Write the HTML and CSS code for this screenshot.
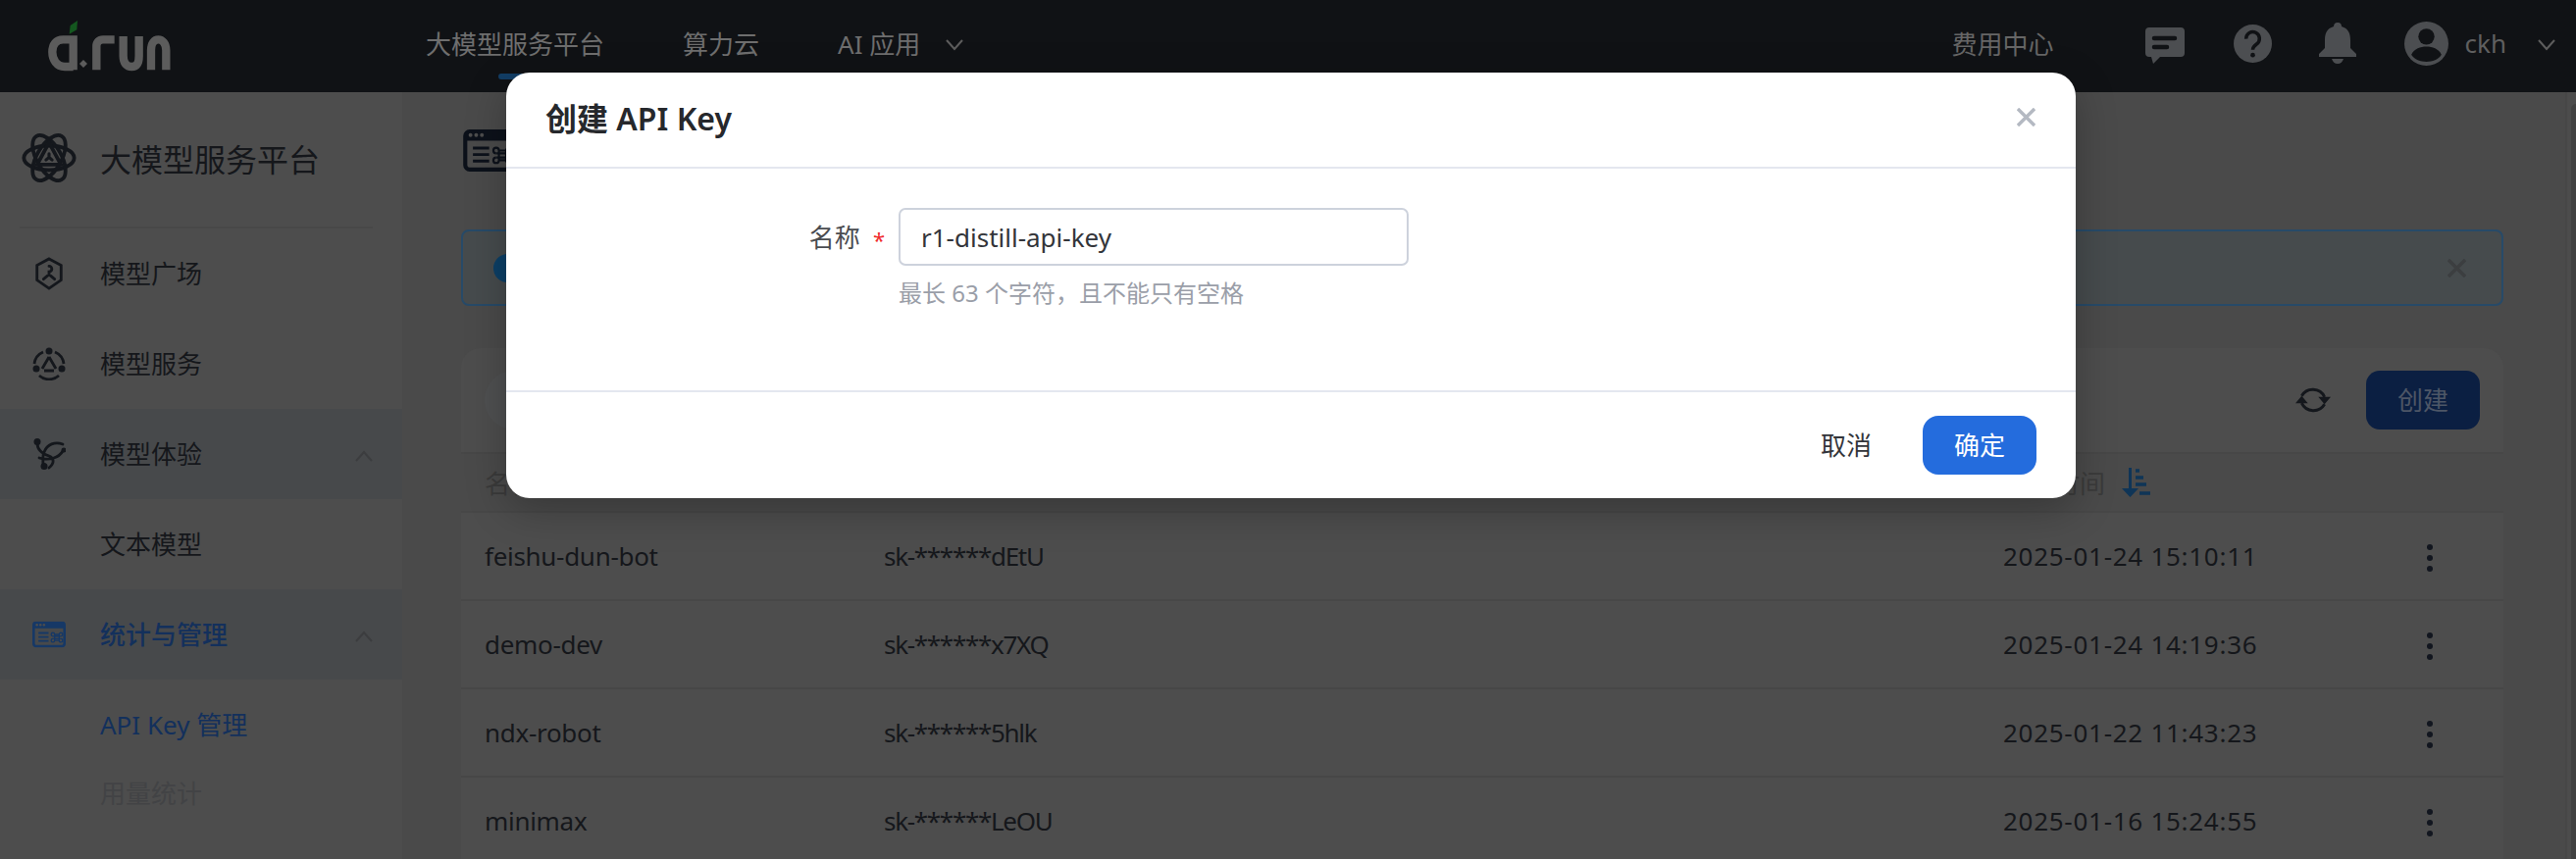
FILE: index.html
```html
<!DOCTYPE html>
<html lang="zh-CN">
<head>
    <meta charset="UTF-8">
    <meta name="viewport" content="width=device-width, initial-scale=1.0">
    <title>创建 API Key</title>
    <link rel="stylesheet" href="styles.css">
</head>
<body>
    <svg class="defs" width="0" height="0">
        <symbol id="i-window" viewBox="0 0 66 52">
            <path fill="currentColor" fill-rule="evenodd" d="M8 0h50a8 8 0 0 1 8 8v36a8 8 0 0 1-8 8H8a8 8 0 0 1-8-8V8a8 8 0 0 1 8-8zM5 14v30a3 3 0 0 0 3 3h50a3 3 0 0 0 3-3V14z"/>
            <circle cx="9" cy="7" r="2.4" fill="#4d4d4d"/>
            <circle cx="16" cy="7" r="2.4" fill="#4d4d4d"/>
            <circle cx="23" cy="7" r="2.4" fill="#4d4d4d"/>
            <path stroke="currentColor" stroke-width="3.6" fill="none" d="M12 23h20M12 31h20M12 39h20"/>
            <path stroke="currentColor" stroke-width="2.6" fill="none" d="M44 26h9v12h-9zM44 26a3.4 3.4 0 1 0-3.400 3.400M53 26a3.400 3.400 0 1 1 3.400 3.400M44 38a3.400 3.400 0 1 1-3.400-3.400M53 38a3.400 3.400 0 1 0 3.400-3.400M41 29.400h15M41 34.600h15"/>
        </symbol>
        <symbol id="i-chev" viewBox="0 0 20 12">
            <path d="M2 1l8 9 8-9" fill="none" stroke="currentColor" stroke-width="2"/>
        </symbol>
        <symbol id="i-close" viewBox="0 0 20 20">
            <path d="M1 1l18 18M19 1L1 19" fill="none" stroke="currentColor" stroke-width="3.600"/>
        </symbol>
    </svg>

    <header class="topbar">
        <svg class="logo" viewBox="0 0 480 210" role="img" aria-label="d.run">
            <g fill="none" stroke="#5c5c5c" stroke-width="25">
                <path d="M134 178V85H103c-22 0-33 15-33 38s13 45 38 45h26"/>
                <path d="M205 178V105c0-12 8-20 20-20h35"/>
                <path d="M287 75V135c0 22 10 33 26 33s22-11 22-33V75"/>
                <path d="M372 178V118c0-22 10-33 22-33s24 11 24 33V178"/>
            </g>
            <path d="M165 147l12 12-12 12-12-12z" fill="#5c5c5c"/>
            <path d="M125 42l22-15-2 28-23 13z" fill="#14571f"/>
        </svg>
        <nav class="topnav">
            <a class="topnav-item active">大模型服务平台</a>
            <a class="topnav-item">算力云</a>
            <a class="topnav-item">AI 应用 <svg class="chev-top"><use href="#i-chev"/></svg></a>
        </nav>
        <div class="topright">
            <a class="billing">费用中心</a>
            <svg class="icon-chat" viewBox="0 0 40 37"><path fill="#4c4e51" d="M4 0h32a4 4 0 0 1 4 4v22a4 4 0 0 1-4 4H15l-7 7-2-7H4a4 4 0 0 1-4-4V4a4 4 0 0 1 4-4z"/><path stroke="#101215" stroke-width="4.500" stroke-linecap="round" d="M9 11h21M9 20h13"/></svg>
            <svg class="icon-help" viewBox="0 0 40 40"><circle cx="20" cy="20" r="20" fill="#4c4e51"/><path d="M13 15a7 7 0 1 1 11 5.500c-2.500 1.800-4 3-4 6" fill="none" stroke="#101215" stroke-width="3.600"/><circle cx="20" cy="32" r="2.400" fill="#101215"/></svg>
            <svg class="icon-bell" viewBox="0 0 38 42"><path fill="#4c4e51" d="M19 0c3 0 4 2 4 4 7 2 9 7 9 14v8l6 6v3H0v-3l6-6v-8C6 11 8 6 15 4c0-2 1-4 4-4zM13 37h12c-1 3-3 5-6 5s-5-2-6-5z"/></svg>
            <svg class="avatar" viewBox="0 0 44 44"><circle cx="22" cy="22" r="22" fill="#4c4e51"/><circle cx="22" cy="15" r="8" fill="#101215"/><path d="M7 33c3-6 9-8 15-8s12 2 15 8c-3 5-9 7-15 7s-12-2-15-7z" fill="#101215"/></svg>
            <span class="username">ckh</span>
            <svg class="chev-top"><use href="#i-chev"/></svg>
        </div>
    </header>

    <div class="layout">
        <aside class="sidebar">
            <div class="side-head">
                <svg class="side-logo" viewBox="40 55 160 150" fill="none" stroke="#14171c" stroke-width="11" stroke-linecap="round">
                    <ellipse cx="120" cy="130" rx="74" ry="36"/>
                    <ellipse cx="120" cy="130" rx="74" ry="36" transform="rotate(60 120 130)"/>
                    <ellipse cx="120" cy="130" rx="74" ry="36" transform="rotate(-60 120 130)"/>
                    <path d="M120 85L85 150h70z"/>
                    <path d="M120 118v10l-9 8M120 128l9 8" stroke-width="9"/>
                </svg>
                <span>大模型服务平台</span>
            </div>
            <ul class="menu">
                <li class="menu-item">
                    <svg class="menu-icon" viewBox="0 0 34 36" fill="none" stroke="#14171c" stroke-width="3"><path d="M17 2l13 7v16l-13 9-13-9V9z"/><path d="M17 10a2.500 2.500 0 0 1 0 6v3l-6 5M17 19l6 5" stroke-linecap="round"/></svg>
                    <span>模型广场</span>
                </li>
                <li class="menu-item">
                    <svg class="menu-icon" viewBox="0 0 34 34" fill="none" stroke="#14171c" stroke-width="2.800"><path d="M11 5a15 15 0 0 0-9 12M23 5a15 15 0 0 1 9 12M7 29a15 15 0 0 0 20 0" /><path d="M17 10l-7 12M17 10l7 12M12 24h10"/><g fill="#14171c" stroke="none"><circle cx="17" cy="4" r="3.500"/><circle cx="4" cy="22" r="3.500"/><circle cx="30" cy="22" r="3.500"/></g></svg>
                    <span>模型服务</span>
                </li>
                <li class="menu-item open">
                    <svg class="menu-icon" viewBox="0 0 34 32" fill="none" stroke="#14171c" stroke-width="2.800" stroke-linecap="round"><path d="M5 5c0 8 6 11 12 13 5 2 6 7 0 12M31 6c-8-3-16 0-19 8-2 4-1 8-1 14M7 20c10 3 20 0 24-7"/><g fill="#14171c" stroke="none"><circle cx="5" cy="3.500" r="3.500"/><circle cx="32" cy="12" r="2.500"/><circle cx="12" cy="28.500" r="3.500"/></g></svg>
                    <span>模型体验</span>
                    <svg class="chev-side"><use href="#i-chev"/></svg>
                </li>
                <li class="menu-sub">文本模型</li>
                <li class="menu-item open current">
                    <svg class="menu-icon window"><use href="#i-window"/></svg>
                    <span>统计与管理</span>
                    <svg class="chev-side"><use href="#i-chev"/></svg>
                </li>
                <li class="menu-sub current">API Key 管理</li>
                <li class="menu-sub disabled">用量统计</li>
            </ul>
        </aside>

        <main class="content">
            <svg class="page-icon"><use href="#i-window"/></svg>
            <div class="alert">
                <span class="alert-icon"></span>
                <svg class="alert-close"><use href="#i-close"/></svg>
            </div>
            <section class="card">
                <div class="toolbar">
                    <span class="search"></span>
                    <svg class="refresh" viewBox="0 0 34 32" fill="none" stroke="#14171c" stroke-width="2.800"><path d="M6 12A12.500 12.500 0 0 1 28 13M28 20A12.500 12.500 0 0 1 6 19"/><path d="M22 13h12l-6 7zM0 19h12l-6-7z" fill="#14171c" stroke="none"/></svg>
                    <button class="btn-create">创建</button>
                </div>
                <div class="row head">
                    <span>名称</span>
                    <span>API Key</span>
                    <span class="time-head">创建时间
                        <svg class="sort-icon" viewBox="0 0 30 30"><path d="M8 0h3v21h7l-8.500 9L1 21h7z" fill="#0f3557"/><path d="M15 3h4M15 10h8M15 17h11M19 26h11" stroke="#0f3557" stroke-width="3.500"/></svg>
                    </span>
                    <span></span>
                </div>
                <div class="row">
                    <span class="name">feishu-dun-bot</span><span class="key">sk-******dEtU</span><span class="time">2025-01-24 15:10:11</span>
                    <svg class="kebab" viewBox="0 0 6 28"><circle cx="3" cy="3" r="3"/><circle cx="3" cy="14" r="3"/><circle cx="3" cy="25" r="3"/></svg>
                </div>
                <div class="row">
                    <span class="name">demo-dev</span><span class="key">sk-******x7XQ</span><span class="time">2025-01-24 14:19:36</span>
                    <svg class="kebab" viewBox="0 0 6 28"><circle cx="3" cy="3" r="3"/><circle cx="3" cy="14" r="3"/><circle cx="3" cy="25" r="3"/></svg>
                </div>
                <div class="row">
                    <span class="name">ndx-robot</span><span class="key">sk-******5hlk</span><span class="time">2025-01-22 11:43:23</span>
                    <svg class="kebab" viewBox="0 0 6 28"><circle cx="3" cy="3" r="3"/><circle cx="3" cy="14" r="3"/><circle cx="3" cy="25" r="3"/></svg>
                </div>
                <div class="row">
                    <span class="name">minimax</span><span class="key">sk-******LeOU</span><span class="time">2025-01-16 15:24:55</span>
                    <svg class="kebab" viewBox="0 0 6 28"><circle cx="3" cy="3" r="3"/><circle cx="3" cy="14" r="3"/><circle cx="3" cy="25" r="3"/></svg>
                </div>
            </section>
        </main>

        <div class="rail"><div class="rail-panel"></div></div>
    </div>

    <div class="modal">
        <div class="modal-head">
            <h2>创建 API Key</h2>
            <svg class="modal-close"><use href="#i-close"/></svg>
        </div>
        <div class="modal-body">
            <label class="field-label" for="keyName">名称<span class="star">*</span></label>
            <div class="field">
                <input id="keyName" type="text" value="r1-distill-api-key">
                <p class="hint">最长 63 个字符，且不能只有空格</p>
            </div>
        </div>
        <div class="modal-foot">
            <button class="btn-cancel">取消</button>
            <button class="btn-ok">确定</button>
        </div>
    </div>
</body>
</html>
```

FILE: styles.css
```css
* { box-sizing: border-box; }
html, body { margin: 0; padding: 0; }
body { position: relative; width: 2626px; height: 876px; overflow: hidden; background: #4a4a4a; color: #15171b; font-family: "Noto Sans", "Noto Sans CJK SC", sans-serif; font-size: 26px; }
.defs { position: absolute; }

/* top bar */
.topbar { display: flex; align-items: center; height: 94px; padding-bottom: 6px; background: #101215; color: #6e6e6e; }
.logo { flex: none; width: 160px; height: 70px; margin: 0 244px 0 30px; position: relative; top: 3px; }
.topnav { display: flex; gap: 80px; }
.topnav-item { position: relative; display: flex; align-items: center; gap: 25px; }
.topnav-item.active::after { content: ""; position: absolute; left: 74px; top: 50px; width: 34px; height: 6px; border-radius: 3px; background: #123e66; }
.chev-top { width: 20px; height: 12px; color: #5d5d5d; margin-top: 4px; }
.topright { display: flex; align-items: center; margin-left: auto; padding-right: 20px; }
.billing { margin-right: 93px; color: #666; }
.icon-chat { width: 40px; height: 37px; margin: 5px 50px 0 0; }
.icon-help { width: 39px; height: 39px; margin-right: 48px; }
.icon-bell { width: 38px; height: 42px; margin-right: 49px; }
.avatar { width: 45px; height: 45px; }
.username { margin-left: 17px; margin-right: 31px; color: #5f5f5f; }

/* page */
.layout { display: flex; height: 782px; overflow: hidden; }
.sidebar { flex: none; width: 410px; background: #4d4d4d; }
.side-head { display: flex; align-items: center; gap: 24px; height: 139px; margin: 0 30px 0 20px; padding: 0 0 3px 2px; border-bottom: 2px solid #484848; font-size: 32px; }
.side-logo { width: 56px; height: 52px; }
.menu { list-style: none; margin: 0; padding: 0; }
.menu-item, .menu-sub { position: relative; display: flex; align-items: center; height: 92px; padding: 0 0 2px 102px; }
.menu-item.open { background: #47494b; }
.menu-icon { position: absolute; left: 33px; top: 50%; width: 34px; height: 34px; transform: translateY(-50%); }
.menu-icon.window { color: #163866; height: 27px; }
.chev-side { position: absolute; left: 361px; top: 42px; width: 20px; height: 12px; color: #3c3d3f; transform: rotate(180deg); }
.current { color: #13305c; }
.menu-item.current { font-weight: 500; }
.disabled { color: #424345; }
.menu-sub.disabled { height: 48px; }

.content { flex: none; width: 2205px; padding: 38px 63px 0 60px; }
.page-icon { display: block; width: 55px; height: 43px; margin: 0 0 59px 2px; color: #0c111a; }
.alert { display: flex; align-items: center; justify-content: space-between; height: 78px; padding: 0 36px 0 31px; border: 2px solid #274a68; border-radius: 8px; background: #464b4d; }
.alert-icon { width: 29px; height: 29px; border-radius: 50%; background: #0c3f66; }
.alert-close { width: 19px; height: 19px; color: #3c3e40; }
.card { margin-top: 43px; border-radius: 20px 20px 0 0; background: #4d4d4d; }
.toolbar { display: flex; align-items: center; justify-content: flex-end; height: 108px; padding: 0 24px; border-bottom: 2px solid #474747; }
.search { width: 400px; height: 60px; margin-right: auto; border-radius: 30px; background: #4f5051; }
.refresh { width: 36px; height: 34px; margin-right: 36px; }
.btn-create { width: 116px; height: 60px; padding: 0 0 3px; border: none; border-radius: 14px; background: #0b1f42; color: #4d5666; font: inherit; }
.row { display: grid; grid-template-columns: 407px 1141px 432px 1fr; align-items: center; height: 90px; padding-left: 24px; border-bottom: 2px solid #474747; }
.row.head { height: 60px; background: #4a4a4a; color: #3a3a3a; }
.name { letter-spacing: -0.3px; }
.key { letter-spacing: -1.3px; }
.time { letter-spacing: 0.72px; }
.time-head { display: flex; align-items: center; gap: 16px; }
.sort-icon { width: 30px; height: 30px; }
.kebab { width: 6px; height: 28px; fill: #12161f; margin-top: 4px; }

/* dialog */
.modal { position: absolute; left: 516px; top: 74px; width: 1600px; height: 434px; border-radius: 24px; background: #fff; box-shadow: 0 12px 40px rgba(0,0,0,.25); }
.modal-head { display: flex; align-items: center; justify-content: space-between; height: 98px; padding: 0 41px 6px 40px; border-bottom: 2px solid #e4e7ef; }
.modal-head h2 { margin: 0; font-size: 32px; font-weight: 600; color: #26282c; }
.modal-close { width: 19px; height: 19px; color: #b4b9c2; }
.modal-body { display: flex; height: 228px; padding-top: 40px; border-bottom: 2px solid #e4e7ef; }
.field-label { display: flex; align-items: center; justify-content: flex-end; width: 400px; height: 58px; padding-right: 14px; color: #4a4c50; }
.star { position: relative; top: 3px; margin-left: 13px; color: #f02d2d; font-size: 22px; }
.field { width: 520px; }
.field input { display: block; width: 100%; height: 59px; padding: 0 21px; border: 2px solid #cdd2dc; border-radius: 7px; color: #33353a; font: inherit; outline: none; }
.hint { margin: 11px 0 0; font-size: 24px; line-height: 34px; color: #9a9ea8; }
.modal-foot { display: flex; align-items: center; justify-content: flex-end; height: 106px; padding: 2px 40px 0 0; }
.btn-cancel { width: 116px; height: 60px; margin-right: 20px; padding: 0 0 3px; border: none; background: none; color: #33353a; font: inherit; }
.btn-ok { width: 116px; height: 60px; padding: 0 0 3px; border: none; border-radius: 16px; background: #246cdd; color: #fff; font: inherit; }

.rail { flex: none; width: 11px; padding: 12px 0 0 4px; background: #4c4c4c; border-left: 2px solid #474747; }
.rail-panel { height: 100%; border-radius: 8px 0 0 0; background: #414141; }
```
